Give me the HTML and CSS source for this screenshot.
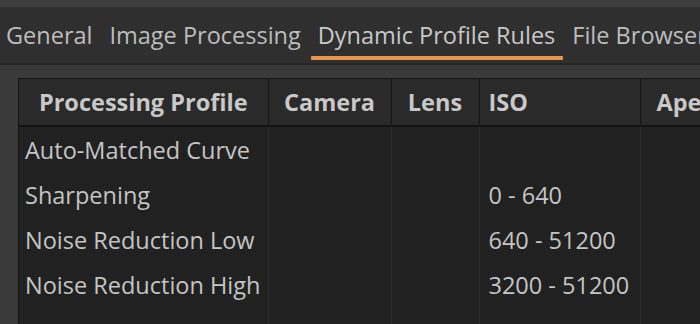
FILE: index.html
```html
<!DOCTYPE html>
<html>
<head>
<meta charset="utf-8">
<link rel="stylesheet" href="styles.css">
</head>
<body>
<div class="app">
  <div class="topstrip"></div>
  <div class="tabbar">
    <div class="tab">General</div>
    <div class="tab">Image Processing</div>
    <div class="tab active">Dynamic Profile Rules</div>
    <div class="tab">File Browser</div>
  </div>
  <div class="panel">
    <div class="tablewrap">
      <table class="grid">
        <colgroup>
          <col class="c1"><col class="c2"><col class="c3"><col class="c4"><col class="c5">
        </colgroup>
        <thead>
          <tr>
            <th>Processing Profile</th>
            <th>Camera</th>
            <th>Lens</th>
            <th class="left">ISO</th>
            <th class="left pad">Aperture</th>
          </tr>
        </thead>
        <tbody>
          <tr><td>Auto-Matched Curve</td><td></td><td></td><td></td><td></td></tr>
          <tr><td>Sharpening</td><td></td><td></td><td>0 - 640</td><td></td></tr>
          <tr><td>Noise Reduction Low</td><td></td><td></td><td>640 - 51200</td><td></td></tr>
          <tr><td>Noise Reduction High</td><td></td><td></td><td>3200 - 51200</td><td></td></tr>
          <tr class="filler"><td></td><td></td><td></td><td></td><td></td></tr>
        </tbody>
      </table>
    </div>
  </div>
</div>
</body>
</html>
```
FILE: styles.css
```css
html, body {
  margin: 0;
  padding: 0;
  background: #3b3b3b;
}
body {
  width: 700px;
  height: 324px;
  overflow: hidden;
  font-family: "Open Sans", "Noto Sans", sans-serif;
  font-size: 23.5px;
  color: #c4c4c4;
}
.app {
  display: flex;
  flex-direction: column;
  width: 700px;
  height: 324px;
}
.topstrip {
  height: 7px;
  background: #3e3e3e;
  border-bottom: 1px solid #333;
}
.tabbar {
  height: 55px;
  background: #2f2f2f;
  border-bottom: 2px solid #262626;
  display: flex;
  gap: 1px;
  padding-left: 0;
  white-space: nowrap;
  overflow: hidden;
}
.tab {
  position: relative;
  padding: 0 8px;
  line-height: 54px;
  color: #bdbdbd;
  flex: none;
}
.tab:first-child {
  margin-left: -2px;
}
.tab.active {
  color: #c8c8c8;
}
.tab.active::after {
  content: "";
  position: absolute;
  left: 1px;
  right: 0;
  bottom: 3px;
  height: 4px;
  background: #e5964a;
  border-radius: 1px;
}
.panel {
  flex: 1;
  background: #3a3a3a;
  padding: 13px 0 0 18px;
  overflow: hidden;
}
.tablewrap {
  height: 100%;
  background: #212121;
  border-top: 1px solid #141414;
  border-left: 1px solid #141414;
  overflow: hidden;
}
.grid {
  border-collapse: collapse;
  table-layout: fixed;
  width: 800px;
}
.c1 { width: 249px; }
.c2 { width: 123px; }
.c3 { width: 88px; }
.c4 { width: 161px; }
.c5 { width: 179px; }
th {
  height: 46px;
  padding: 0;
  background: #2a2a2a;
  color: #c8c8c8;
  font-weight: 700;
  text-align: center;
  border-right: 1px solid #141414;
  border-bottom: 2px solid #141414;
  white-space: nowrap;
  overflow: hidden;
}
th.left {
  text-align: left;
  padding-left: 9px;
}
th.pad {
  padding-left: 16px;
}
td {
  height: 45px;
  padding: 0 0 0 6px;
  border-right: 1px solid #2b2b2b;
  color: #c4c4c4;
  white-space: nowrap;
  overflow: hidden;
}
td:nth-child(4) {
  padding-left: 9px;
}
tr.filler td {
  height: 40px;
}
```
